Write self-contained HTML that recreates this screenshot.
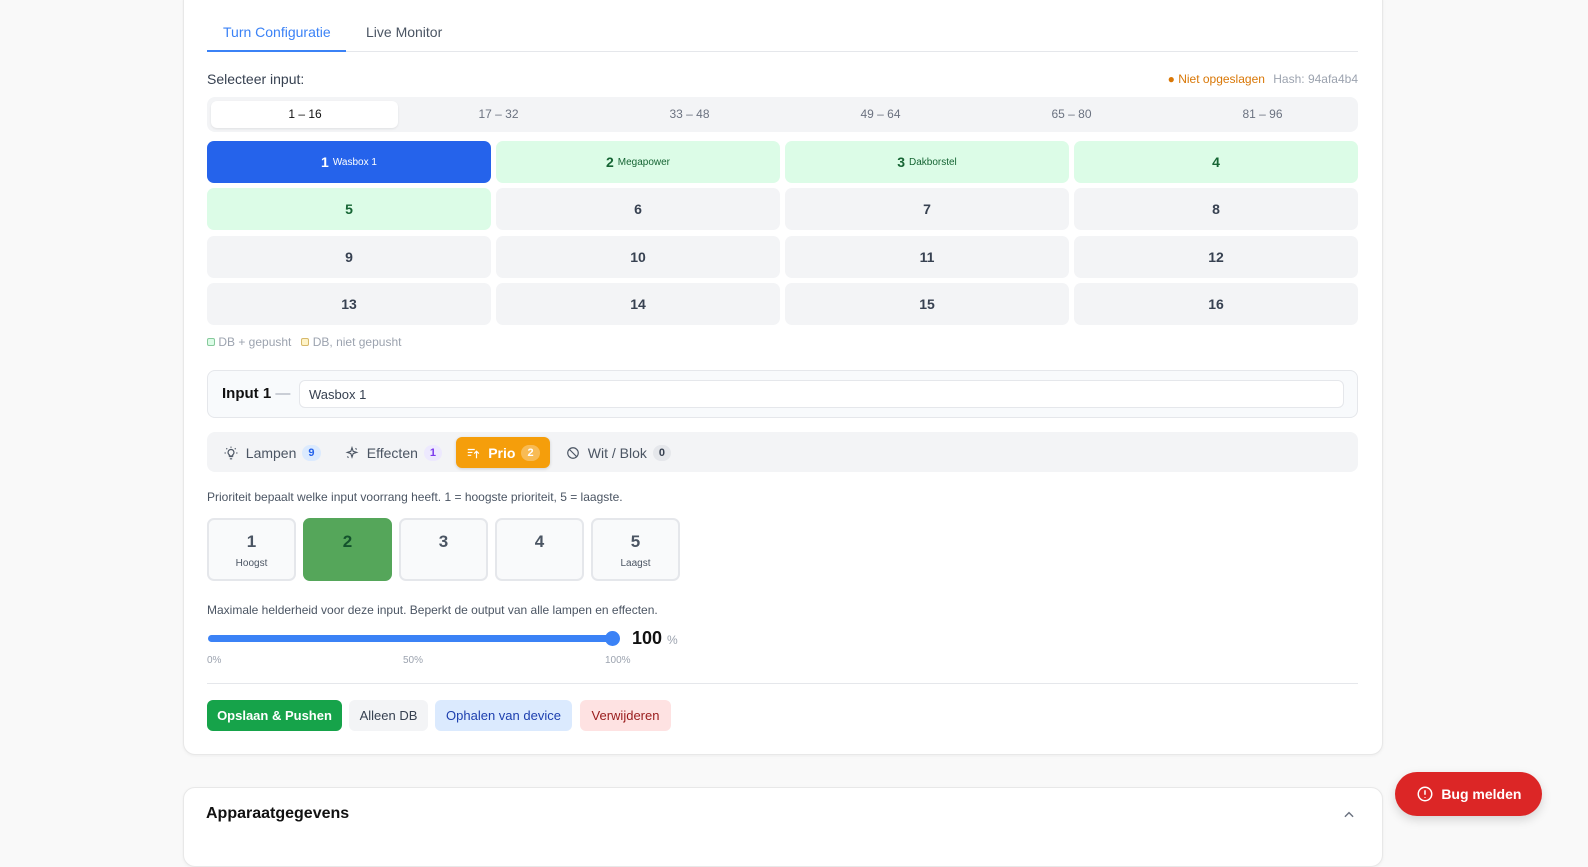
<!DOCTYPE html>
<html><head><meta charset="utf-8"><style>
*{box-sizing:border-box;margin:0;padding:0}
body{width:1588px;height:849px;background:#f9f9f9;font-family:"Liberation Sans",sans-serif;position:relative;overflow:hidden;color:#1f2937}
.card{position:absolute;left:183px;width:1200px;background:#fff;border:1px solid #e8e8e8;border-radius:12px;box-shadow:0 1px 3px rgba(0,0,0,.05)}
.a{position:absolute}
.tab{position:absolute;top:24px;font-size:14px}
.cell{position:absolute;width:284px;height:42px;border-radius:7px;background:#f3f4f6;display:flex;align-items:center;justify-content:center;font-size:14px;font-weight:bold;color:#374151}
.g{background:#dcfce7;color:#166534}
.cell small{font-size:10px;font-weight:normal;margin-left:4px}
.pb{position:absolute;top:518px;width:89px;height:63px;border:2px solid #e5e7eb;border-radius:7px;background:#f9fafb;text-align:center;color:#4b5563}
.pb b{display:block;font-size:17px;margin-top:12px}
.pb span{display:block;font-size:10px;margin-top:6px}
.btn{position:absolute;top:700px;height:31px;border-radius:6px;font-size:13px;display:flex;align-items:center;justify-content:center}
.bd{display:inline-block;border-radius:9px;font-size:11px;font-weight:bold;padding:2px 6px;margin-left:6px}
.st{position:absolute;top:437px;height:31px;display:flex;align-items:center;font-size:14px;color:#4b5563}
</style></head><body>
<div class="card" style="top:-12px;height:767px"></div>
<div class="card" style="top:787px;height:80px"></div>

<div class="tab" style="left:223px;color:#3b82f6">Turn Configuratie</div>
<div class="tab" style="left:366px;color:#4b5563">Live Monitor</div>
<div class="a" style="left:207px;top:51px;width:1151px;height:1px;background:#e5e7eb"></div>
<div class="a" style="left:207px;top:50px;width:139px;height:2px;background:#3b82f6"></div>

<div class="a" style="left:207px;top:71px;font-size:14px;color:#374151">Selecteer input:</div>
<div class="a" style="right:230px;top:72px;font-size:12px;color:#d97706">● Niet opgeslagen <span style="color:#9ca3af;margin-left:5px">Hash: 94afa4b4</span></div>

<div class="a" style="left:207px;top:97px;width:1151px;height:35px;background:#f3f4f6;border-radius:8px"></div>
<div class="a" style="left:211px;top:101px;width:187px;height:27px;background:#fff;border-radius:6px;box-shadow:0 1px 2px rgba(0,0,0,.08)"></div>
<div class="a" style="top:107px;left:207px;width:1151px;font-size:12px;color:#6b7280;display:flex">
<div style="width:196px;text-align:center;color:#111">1 – 16</div><div style="width:191px;text-align:center">17 – 32</div><div style="width:191px;text-align:center">33 – 48</div><div style="width:191px;text-align:center">49 – 64</div><div style="width:191px;text-align:center">65 – 80</div><div style="width:191px;text-align:center">81 – 96</div></div>

<div class="cell" style="left:207px;top:141px;background:#2563eb;color:#fff">1<small>Wasbox 1</small></div>
<div class="cell g" style="left:496px;top:141px">2<small>Megapower</small></div>
<div class="cell g" style="left:785px;top:141px">3<small>Dakborstel</small></div>
<div class="cell g" style="left:1074px;top:141px">4</div>
<div class="cell g" style="left:207px;top:188px">5</div>
<div class="cell" style="left:496px;top:188px">6</div>
<div class="cell" style="left:785px;top:188px">7</div>
<div class="cell" style="left:1074px;top:188px">8</div>
<div class="cell" style="left:207px;top:236px">9</div>
<div class="cell" style="left:496px;top:236px">10</div>
<div class="cell" style="left:785px;top:236px">11</div>
<div class="cell" style="left:1074px;top:236px">12</div>
<div class="cell" style="left:207px;top:283px">13</div>
<div class="cell" style="left:496px;top:283px">14</div>
<div class="cell" style="left:785px;top:283px">15</div>
<div class="cell" style="left:1074px;top:283px">16</div>

<div class="a" style="left:207px;top:335px;font-size:12px;color:#9ca3af"><span style="display:inline-block;width:8px;height:8px;border:1px solid #86c99b;background:#dcfce7;border-radius:2px"></span> DB + gepusht &nbsp; <span style="display:inline-block;width:8px;height:8px;border:1px solid #d6b86a;background:#fef3c7;border-radius:2px"></span> DB, niet gepusht</div>

<div class="a" style="left:207px;top:370px;width:1151px;height:48px;border:1px solid #e5e7eb;border-radius:8px;background:#f8fafc"></div>
<div class="a" style="left:222px;top:385px;font-size:15px;font-weight:bold;color:#111">Input 1 <span style="color:#9ca3af;font-weight:normal">—</span></div>
<div class="a" style="left:299px;top:380px;width:1045px;height:28px;border:1px solid #e5e7eb;border-radius:6px;background:#fff;font-size:13px;padding:6px 9px;color:#374151">Wasbox 1</div>

<div class="a" style="left:207px;top:432px;width:1151px;height:40px;background:#f3f4f6;border-radius:8px"></div>
<div class="st" style="left:224px"><svg width="14" height="14" viewBox="0 0 24 24" fill="none" stroke="#4b5563" stroke-width="2"><path d="M9 18h6M10 22h4M12 6a5 5 0 0 0-3 9v2h6v-2a5 5 0 0 0-3-9zM12 1v2M4 4l1.5 1.5M20 4l-1.5 1.5M1 12h2M21 12h2"/></svg>&nbsp; Lampen<span class="bd" style="background:#dbeafe;color:#2563eb">9</span></div>
<div class="st" style="left:345px"><svg width="14" height="14" viewBox="0 0 24 24" fill="none" stroke="#4b5563" stroke-width="2"><path d="M12 3l2 6 6 2-6 2-2 6-2-6-6-2 6-2z"/><path d="M4 18l2 2M18 4l2 2"/></svg>&nbsp; Effecten<span class="bd" style="background:#ede9fe;color:#7c3aed">1</span></div>
<div class="st" style="left:456px;width:94px;background:#f59e0b;border-radius:6px;color:#fff;font-weight:bold;justify-content:center;box-shadow:0 1px 3px rgba(0,0,0,.15)"><svg width="14" height="14" viewBox="0 0 24 24" fill="none" stroke="#fff" stroke-width="2"><path d="M3 6h12M3 11h8M3 16h6M18 21V9M14 13l4-4 4 4"/></svg>&nbsp; Prio<span class="bd" style="background:rgba(255,255,255,.3);color:#fff">2</span></div>
<div class="st" style="left:566px"><svg width="14" height="14" viewBox="0 0 24 24" fill="none" stroke="#4b5563" stroke-width="2"><circle cx="12" cy="12" r="9"/><path d="M5.6 5.6l12.8 12.8"/></svg>&nbsp; Wit / Blok<span class="bd" style="background:#e5e7eb;color:#374151">0</span></div>

<div class="a" style="left:207px;top:490px;font-size:12px;color:#4b5563">Prioriteit bepaalt welke input voorrang heeft. 1 = hoogste prioriteit, 5 = laagste.</div>
<div class="pb" style="left:207px"><b>1</b><span>Hoogst</span></div>
<div class="pb" style="left:303px;background:#55a65a;border-color:#55a65a;color:#14532d"><b>2</b></div>
<div class="pb" style="left:399px"><b>3</b></div>
<div class="pb" style="left:495px"><b>4</b></div>
<div class="pb" style="left:591px"><b>5</b><span>Laagst</span></div>

<div class="a" style="left:207px;top:603px;font-size:12px;color:#4b5563">Maximale helderheid voor deze input. Beperkt de output van alle lampen en effecten.</div>
<div class="a" style="left:208px;top:635px;width:408px;height:7px;background:#3b82f6;border-radius:4px"></div>
<div class="a" style="left:605px;top:631px;width:15px;height:15px;background:#3b82f6;border-radius:50%"></div>
<div class="a" style="left:632px;top:628px;font-size:18px;font-weight:bold;color:#111">100 <span style="font-size:12px;color:#9ca3af;font-weight:normal">%</span></div>
<div class="a" style="left:207px;top:655px;font-size:10px;color:#9ca3af">0%</div>
<div class="a" style="left:403px;top:655px;font-size:10px;color:#9ca3af">50%</div>
<div class="a" style="left:605px;top:655px;font-size:10px;color:#9ca3af">100%</div>

<div class="a" style="left:207px;top:683px;width:1151px;height:1px;background:#e5e7eb"></div>
<div class="btn" style="left:207px;width:135px;background:#16a34a;color:#fff;font-weight:bold">Opslaan &amp; Pushen</div>
<div class="btn" style="left:349px;width:79px;background:#f3f4f6;color:#374151">Alleen DB</div>
<div class="btn" style="left:435px;width:137px;background:#dbeafe;color:#1e40af">Ophalen van device</div>
<div class="btn" style="left:580px;width:91px;background:#fee2e2;color:#991b1b">Verwijderen</div>

<div class="a" style="left:206px;top:805px;font-size:16px;font-weight:bold;color:#111">Apparaatgegevens</div>
<svg class="a" style="left:1342px;top:808px" width="14" height="14" viewBox="0 0 24 24" fill="none" stroke="#6b7280" stroke-width="2.5"><path d="M5 15l7-7 7 7"/></svg>

<div class="a" style="left:1395px;top:772px;width:147px;height:44px;background:#dc2626;border-radius:22px;box-shadow:0 4px 10px rgba(0,0,0,.15);color:#fff;font-weight:bold;font-size:14px;display:flex;align-items:center;justify-content:center"><svg width="18" height="18" viewBox="0 0 24 24" fill="none" stroke="#fff" stroke-width="2"><circle cx="12" cy="12" r="9"/><path d="M12 7v6M12 16v1"/></svg>&nbsp;&nbsp;Bug melden</div>
</body></html>
